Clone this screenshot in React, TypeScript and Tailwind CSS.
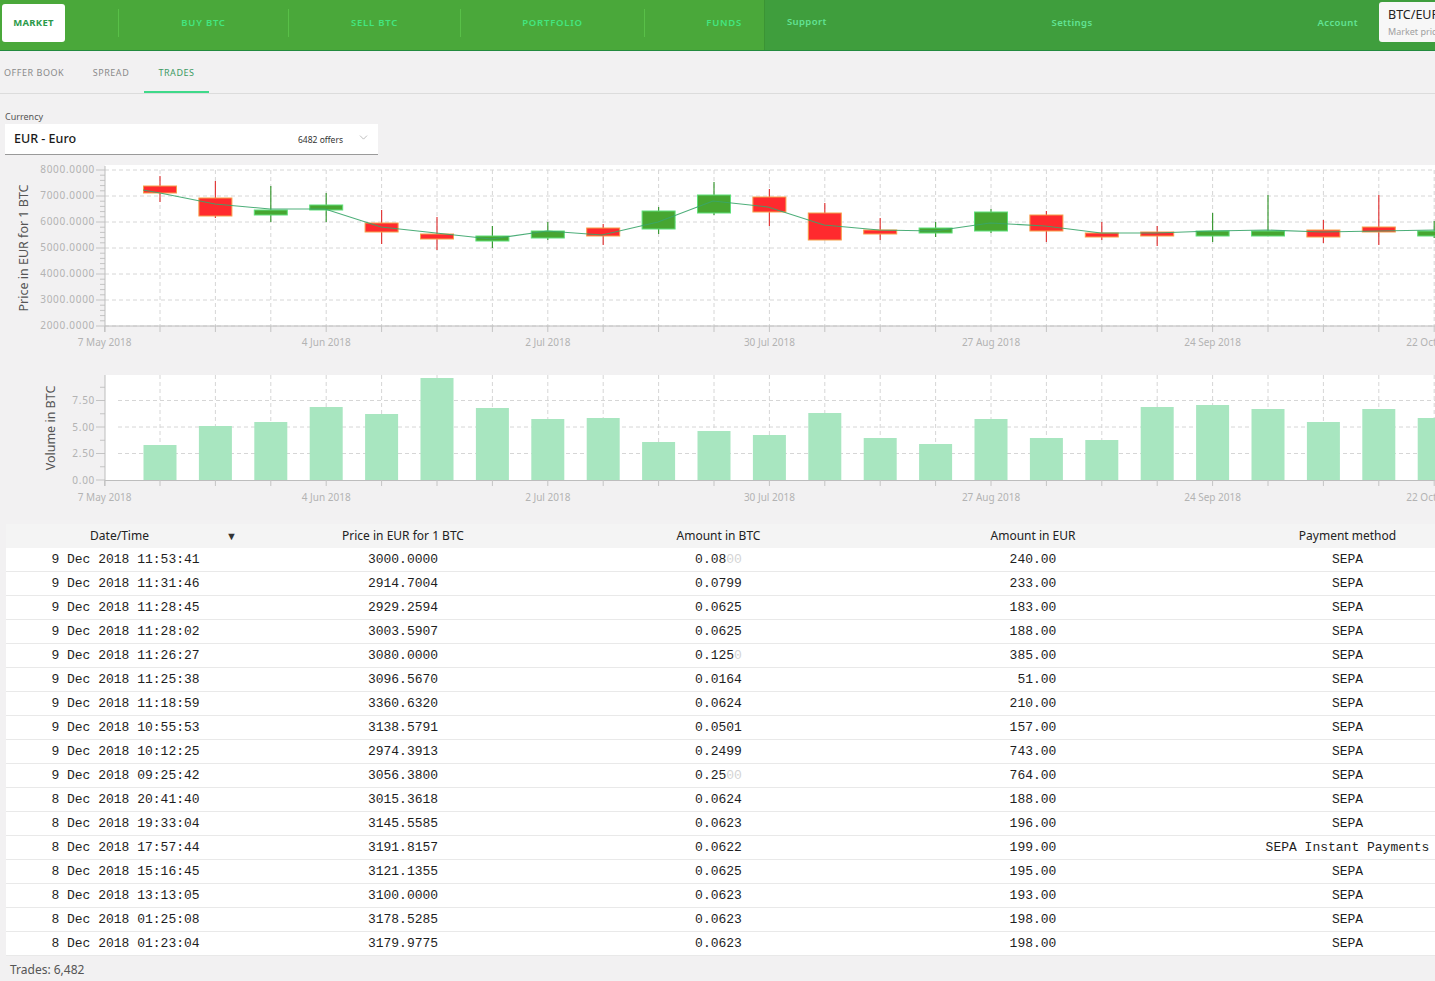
import React from "react";
import { ChevronDown } from "lucide-react";

const weekX = (w: number) => 104.6 + 55.4 * w;

type Candle = [number, number, number, number, boolean];
// bodyTop, bodyBottom, wickTop, wickBottom, isUp(green)
const candles: Candle[] = [
  [186, 193, 176, 202, false],
  [198, 216, 181, 218, false],
  [210, 215, 186, 222, true],
  [205, 210, 193, 222, true],
  [223, 232, 210, 244, false],
  [234, 239, 217, 250, false],
  [236, 241, 226, 248, true],
  [231, 238, 222, 240, true],
  [228, 236, 224, 245, false],
  [211, 229, 207, 234, true],
  [195, 213, 182, 215, true],
  [197, 212, 189, 226, false],
  [213, 240, 203, 240, false],
  [230, 234, 218, 240, false],
  [228, 233, 222, 237, true],
  [212, 231, 209, 233, true],
  [215, 231, 211, 242, false],
  [233, 237, 222, 240, false],
  [232, 236, 226, 246, false],
  [231, 236, 213, 242, true],
  [231, 236, 195, 236, true],
  [230, 237, 220, 243, false],
  [227, 232, 195, 245, false],
  [231, 236, 221, 238, true],
];

const meanLine: [number, number][] = [
  [143, 190], [160, 193], [215, 204], [270, 209], [325, 209], [381, 227], [436, 233],
  [491, 239], [547, 231], [602, 235], [658, 222], [713, 201], [768, 207], [824, 225],
  [879, 230], [935, 231], [990, 223], [1045, 226], [1101, 233], [1156, 233], [1212, 231],
  [1267, 230], [1322, 232], [1378, 231], [1435, 230],
];

const volTops = [445, 426, 422, 407, 414, 378, 408, 419, 418, 442, 431, 435, 413, 438, 444, 419, 438, 440, 407, 405, 409, 422, 409, 418];

const xLabels = ["7 May 2018", "4 Jun 2018", "2 Jul 2018", "30 Jul 2018", "27 Aug 2018", "24 Sep 2018", "22 Oct 2018"];

const FONT = "'Noto Sans', 'Liberation Sans', sans-serif";

function PriceChart() {
  const yTicks = [8000, 7000, 6000, 5000, 4000, 3000, 2000];
  const yOf = (p: number) => 170 + (8000 - p) * 0.026;
  const minors: number[] = [];
  for (let p = 2000; p <= 8000; p += 200) minors.push(p);
  return (
    <svg width={1435} height={190} viewBox="0 160 1435 190" className="block">
      <rect x={105} y={165} width={1330} height={161} fill="#ffffff" />
      {yTicks.map((p) => (
        <line key={p} x1={105} x2={1435} y1={yOf(p)} y2={yOf(p)} stroke="#d6d6d6" strokeDasharray="4 3" strokeWidth={1} />
      ))}
      {Array.from({ length: 24 }, (_, i) => (
        <line key={i} x1={weekX(i + 1)} x2={weekX(i + 1)} y1={170} y2={326} stroke="#d6d6d6" strokeDasharray="4 3" strokeWidth={1} />
      ))}
      {minors.map((p) => (
        <line key={p} x1={p % 1000 === 0 ? 96 : 100} x2={105} y1={yOf(p)} y2={yOf(p)} stroke="#c4c4c4" strokeWidth={1} />
      ))}
      <line x1={105} x2={105} y1={166} y2={332} stroke="#bdbdbd" strokeWidth={1} />
      <line x1={105} x2={1435} y1={326} y2={326} stroke="#bdbdbd" strokeWidth={1} />
      {Array.from({ length: 25 }, (_, i) => (
        <line key={i} x1={weekX(i)} x2={weekX(i)} y1={326} y2={332} stroke="#c4c4c4" strokeWidth={1} />
      ))}
      {yTicks.map((p) => (
        <text key={p} x={95} y={yOf(p) + 0.5} textAnchor="end" dominantBaseline="middle" fontSize={10} fill="#b3b3b3" fontFamily={FONT} letterSpacing={0.7}>
          {p.toFixed(4)}
        </text>
      ))}
      {xLabels.map((l, i) => (
        <text key={l} x={weekX(i * 4)} y={343} textAnchor="middle" dominantBaseline="middle" fontSize={10} fill="#b3b3b3" fontFamily={FONT}>
          {l}
        </text>
      ))}
      <text x={25} y={248} transform="rotate(-90 25 248)" textAnchor="middle" dominantBaseline="middle" fontSize={12.5} fill="#555" fontFamily={FONT}>
        Price in EUR for 1 BTC
      </text>
      {candles.map(([bt, bb, wt, wb, up], i) => {
        const cx = weekX(i + 1);
        return (
          <g key={i}>
            <line x1={cx} x2={cx} y1={wt} y2={wb} stroke={up ? "#3c9a35" : "#e23b3b"} strokeWidth={1.2} />
            <rect x={cx - 16.5} y={bt} width={33} height={Math.max(bb - bt, 2)} fill={up ? "#47a631" : "#ff2a2e"} stroke={up ? "#5fe07a" : "#f6a04a"} strokeWidth={1} />
          </g>
        );
      })}
      <polyline points={meanLine.map((p) => p.join(",")).join(" ")} fill="none" stroke="#3aa56a" strokeWidth={1.1} opacity={0.9} />
    </svg>
  );
}

function VolumeChart() {
  const yOf = (v: number) => 480 - v * 10.6;
  const minors: number[] = [];
  for (let v = 0; v <= 8.75; v += 1.25) minors.push(v);
  return (
    <svg width={1435} height={155} viewBox="0 350 1435 155" className="block">
      <rect x={105} y={375} width={1330} height={105} fill="#ffffff" />
      {[7.5, 5, 2.5].map((v) => (
        <line key={v} x1={118} x2={1435} y1={yOf(v)} y2={yOf(v)} stroke="#d6d6d6" strokeDasharray="4 3" strokeWidth={1} />
      ))}
      {Array.from({ length: 24 }, (_, i) => (
        <line key={i} x1={weekX(i + 1)} x2={weekX(i + 1)} y1={375} y2={480} stroke="#d6d6d6" strokeDasharray="4 3" strokeWidth={1} />
      ))}
      {volTops.map((t, i) => (
        <rect key={i} x={weekX(i + 1) - 16.5} y={t} width={33} height={480 - t} fill="#a8e6c0" />
      ))}
      {minors.map((v) => (
        <line key={v} x1={v % 2.5 === 0 ? 96 : 100} x2={105} y1={yOf(v)} y2={yOf(v)} stroke="#c4c4c4" strokeWidth={1} />
      ))}
      <line x1={105} x2={105} y1={375} y2={486} stroke="#bdbdbd" strokeWidth={1} />
      <line x1={105} x2={1435} y1={480.5} y2={480.5} stroke="#bdbdbd" strokeWidth={1} />
      {Array.from({ length: 25 }, (_, i) => (
        <line key={i} x1={weekX(i)} x2={weekX(i)} y1={480} y2={486} stroke="#c4c4c4" strokeWidth={1} />
      ))}
      {[7.5, 5, 2.5, 0].map((v) => (
        <text key={v} x={95} y={yOf(v) + 1} textAnchor="end" dominantBaseline="middle" fontSize={10} fill="#b3b3b3" fontFamily={FONT} letterSpacing={0.7}>
          {v.toFixed(2)}
        </text>
      ))}
      {xLabels.map((l, i) => (
        <text key={l} x={weekX(i * 4)} y={498} textAnchor="middle" dominantBaseline="middle" fontSize={10} fill="#b3b3b3" fontFamily={FONT}>
          {l}
        </text>
      ))}
      <text x={52} y={428} transform="rotate(-90 52 428)" textAnchor="middle" dominantBaseline="middle" fontSize={12.5} fill="#555" fontFamily={FONT}>
        Volume in BTC
      </text>
    </svg>
  );
}

type Row = { d: string; p: string; a: string; af?: string; e: string; m: string };
const rows: Row[] = [
  { d: "9 Dec 2018 11:53:41", p: "3000.0000", a: "0.08", af: "00", e: "240.00", m: "SEPA" },
  { d: "9 Dec 2018 11:31:46", p: "2914.7004", a: "0.0799", e: "233.00", m: "SEPA" },
  { d: "9 Dec 2018 11:28:45", p: "2929.2594", a: "0.0625", e: "183.00", m: "SEPA" },
  { d: "9 Dec 2018 11:28:02", p: "3003.5907", a: "0.0625", e: "188.00", m: "SEPA" },
  { d: "9 Dec 2018 11:26:27", p: "3080.0000", a: "0.125", af: "0", e: "385.00", m: "SEPA" },
  { d: "9 Dec 2018 11:25:38", p: "3096.5670", a: "0.0164", e: " 51.00", m: "SEPA" },
  { d: "9 Dec 2018 11:18:59", p: "3360.6320", a: "0.0624", e: "210.00", m: "SEPA" },
  { d: "9 Dec 2018 10:55:53", p: "3138.5791", a: "0.0501", e: "157.00", m: "SEPA" },
  { d: "9 Dec 2018 10:12:25", p: "2974.3913", a: "0.2499", e: "743.00", m: "SEPA" },
  { d: "9 Dec 2018 09:25:42", p: "3056.3800", a: "0.25", af: "00", e: "764.00", m: "SEPA" },
  { d: "8 Dec 2018 20:41:40", p: "3015.3618", a: "0.0624", e: "188.00", m: "SEPA" },
  { d: "8 Dec 2018 19:33:04", p: "3145.5585", a: "0.0623", e: "196.00", m: "SEPA" },
  { d: "8 Dec 2018 17:57:44", p: "3191.8157", a: "0.0622", e: "199.00", m: "SEPA Instant Payments" },
  { d: "8 Dec 2018 15:16:45", p: "3121.1355", a: "0.0625", e: "195.00", m: "SEPA" },
  { d: "8 Dec 2018 13:13:05", p: "3100.0000", a: "0.0623", e: "193.00", m: "SEPA" },
  { d: "8 Dec 2018 01:25:08", p: "3178.5285", a: "0.0623", e: "198.00", m: "SEPA" },
  { d: "8 Dec 2018 01:23:04", p: "3179.9775", a: "0.0623", e: "198.00", m: "SEPA" },
];

const gridCols = "grid grid-cols-[239px_316px_315px_314px_315px] w-[1499px]";

function Separator() {
  return <div className="shrink-0 w-px h-[28px] bg-[#5dc54c] opacity-80" />;
}

function NavItem({ label, w, align = "center" }: { label: string; w: string; align?: "center" | "end" }) {
  return (
    <div className={`${w} shrink-0 h-full flex items-center pb-[4px] ${align === "center" ? "justify-center" : "justify-end pr-[22px]"} text-[9.5px] font-semibold tracking-[0.08em] text-[#43e680]`}>
      {label}
    </div>
  );
}

export default function App() {
  return (
    <div
      className="w-[1435px] h-[981px] overflow-hidden bg-[#f2f1f2] text-[#222]"
      style={{ fontFamily: FONT }}
    >
      {/* Top header */}
      <div className="h-[51px] flex items-stretch bg-[#4aa83a] border-b border-[#238a3f] overflow-hidden whitespace-nowrap">
        <div className="w-[118px] shrink-0 flex items-center pl-[2px] pb-[4px]">
          <div className="w-[63px] h-[38px] bg-white rounded-[3px] flex items-center justify-center text-[9.5px] font-bold tracking-[0.03em] text-[#2b9a4a]">
            MARKET
          </div>
        </div>
        <div className="shrink-0 flex items-center pb-[4px]"><Separator /></div>
        <NavItem label="BUY BTC" w="w-[169px]" />
        <div className="shrink-0 flex items-center pb-[4px]"><Separator /></div>
        <NavItem label="SELL BTC" w="w-[171px]" />
        <div className="shrink-0 flex items-center pb-[4px]"><Separator /></div>
        <NavItem label="PORTFOLIO" w="w-[183px]" />
        <div className="shrink-0 flex items-center pb-[4px]"><Separator /></div>
        <NavItem label="FUNDS" w="w-[119px]" align="end" />
        <div className="shrink-0 w-[671px] flex items-stretch bg-[#3f9e3d] border-l border-[#3b9434] overflow-hidden">
          <div className="shrink-0 w-[136px] h-full flex items-center pl-[22px] pb-[6px] text-[9.5px] font-semibold tracking-[0.04em] text-[#62e394]">
            Support
          </div>
          <div className="shrink-0 w-[342px] h-full flex items-center justify-center pb-[4px] text-[9.5px] font-semibold tracking-[0.04em] text-[#62e394]">
            Settings
          </div>
          <div className="shrink-0 w-[136px] h-full flex items-center justify-end pr-[21px] pb-[4px] text-[9.5px] font-semibold tracking-[0.04em] text-[#62e394]">
            Account
          </div>
          <div className="shrink-0 pt-[2px]">
            <div className="w-[110px] h-[40px] bg-[#f7f7f7] rounded-[3px] pl-[9px] pt-[7px] leading-none">
              <div className="text-[12.5px] text-[#222]">BTC/EUR</div>
              <div className="text-[9px] text-[#a0a0a0] mt-[5px]">Market price</div>
            </div>
          </div>
        </div>
      </div>

      {/* Sub tabs */}
      <div className="h-[43px] flex items-stretch border-b border-[#dcdcdc] text-[9px] tracking-[0.06em] pt-[1px]">
        <div className="w-[78px] flex items-center pl-[4px] text-[#8a8a8a]">OFFER BOOK</div>
        <div className="w-[66px] flex items-center justify-center text-[#8a8a8a]">SPREAD</div>
        <div className="w-[65px] flex items-center justify-center text-[#3b9a62] relative">
          TRADES
          <div className="absolute left-0 right-0 bottom-0 h-[2px] bg-[#3fd98a]" />
        </div>
      </div>

      {/* Currency */}
      <div className="pl-[5px] pt-[17px]">
        <div className="h-[12px] text-[9px] leading-[12px] text-[#555]">Currency</div>
        <div className="mt-[1px] w-[373px] h-[31px] bg-white border-b border-[#9a9a9a] flex items-center pl-[9px] pr-[8px]">
          <div className="text-[12.5px] font-medium text-[#1a1a1a] flex-1">EUR - Euro</div>
          <div className="text-[8.5px] text-[#333] mr-[14px] mt-[2px]">6482 offers</div>
          <ChevronDown size={13} strokeWidth={1.2} className="text-[#9a9a9a] mb-[3px]" />
        </div>
      </div>

      {/* Charts */}
      <div className="mt-[5px]">
        <PriceChart />
        <VolumeChart />
      </div>

      {/* Table */}
      <div className="mt-[19px] ml-[6px] overflow-hidden">
        <div className={`${gridCols} h-[24px] bg-[#f4f4f4] text-[12px] text-[#222] items-center`}>
          <div className="relative h-full flex items-center justify-center pr-[12px]">
            Date/Time
            <span className="absolute left-[220px] top-[4px] text-[11px] text-[#333]">▼</span>
          </div>
          <div className="text-center">Price in EUR for 1 BTC</div>
          <div className="text-center">Amount in BTC</div>
          <div className="text-center">Amount in EUR</div>
          <div className="text-center">Payment method</div>
        </div>
        {rows.map((r, i) => (
          <div
            key={i}
            className={`${gridCols} h-[24px] bg-white border-b border-[#e9e9e9] items-center text-[13px] text-[#1e1e1e] whitespace-pre`}
            style={{ fontFamily: "'Liberation Mono', 'DejaVu Sans Mono', monospace" }}
          >
            <div className="text-center">{r.d}</div>
            <div className="text-center">{r.p}</div>
            <div className="text-center">
              {r.a}
              {r.af ? <span className="text-[#d4d4d4]">{r.af}</span> : null}
            </div>
            <div className="text-center">{r.e}</div>
            <div className="text-center">{r.m}</div>
          </div>
        ))}
      </div>

      {/* Footer */}
      <div className="pl-[10px] pt-[5px] text-[12px] text-[#555]">Trades: 6,482</div>
    </div>
  );
}
